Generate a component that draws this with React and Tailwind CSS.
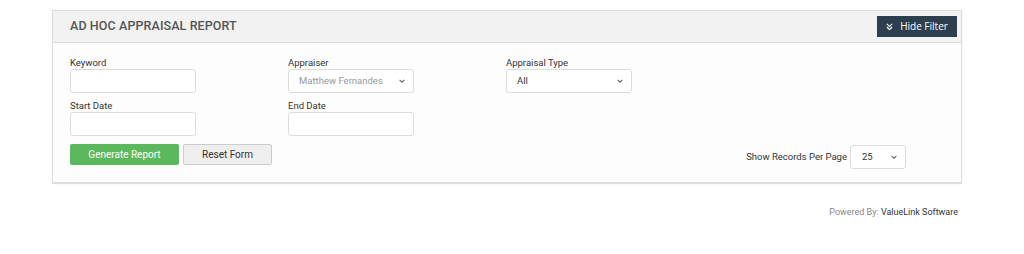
import React from 'react';

const Chevron = () => (
    <svg width="8" height="8" viewBox="0 0 10 10" className="text-[#666]">
        <path d="M2 3.5 L5 6.5 L8 3.5" fill="none" stroke="currentColor" strokeWidth="1.4" />
    </svg>
);

const DoubleChevron = () => (
    <svg width="7" height="8" viewBox="0 0 8 9" className="text-white">
        <path d="M1 1 L4 4 L7 1 M1 4.5 L4 7.5 L7 4.5" fill="none" stroke="currentColor" strokeWidth="1.3" />
    </svg>
);

const Field = ({ label, children }) => (
    <div className="w-[126px]">
        <label className="block text-[9.5px] text-[#333] leading-[11px] mb-[1px]">{label}</label>
        {children}
    </div>
);

const TextInput = () => (
    <input type="text" className="w-full h-[24px] bg-white border border-[#dcdcdc] rounded-[3px] outline-none" />
);

const Select = ({ value, muted, className = 'w-full pl-[10px]' }) => (
    <div className={`${className} h-[24px] bg-white border border-[#dcdcdc] rounded-[3px] flex items-center justify-between pr-[7px]`}>
        <span className={`text-[9.5px] ${muted ? 'text-[#999]' : 'text-[#333]'}`}>{value}</span>
        <Chevron />
    </div>
);

export default function App() {
    return (
        <div className="w-[1024px] h-[254px] bg-white pt-[10px] font-['Roboto',sans-serif]">
            <div className="ml-[52px] w-[910px] border border-[#dedede] shadow-[0_1px_1px_rgba(0,0,0,0.12)] bg-[#fdfdfd]">
                {/* Header */}
                <div className="h-[32px] bg-[#f2f2f2] border-b border-[#dedede] flex items-center justify-between pl-[17px] pr-[4px]">
                    <h2 className="text-[12.5px] font-medium text-[#555] tracking-[0.1px]">AD HOC APPRAISAL REPORT</h2>
                    <button className="h-[21px] w-[80px] bg-[#2d3e4f] text-white flex items-center justify-center gap-[7px]">
                        <DoubleChevron />
                        <span className="font-['Open_Sans',sans-serif] text-[10px] font-medium">Hide Filter</span>
                    </button>
                </div>

                {/* Body */}
                <div className="pl-[17px] pr-[55px] pt-[14px] pb-[17px]">
                    <div className="flex gap-[92px]">
                        <Field label="Keyword"><TextInput /></Field>
                        <Field label="Appraiser"><Select value="Matthew Fernandes" muted /></Field>
                        <Field label="Appraisal Type"><Select value="All" /></Field>
                    </div>
                    <div className="flex gap-[92px] mt-[7px]">
                        <Field label="Start Date"><TextInput /></Field>
                        <Field label="End Date"><TextInput /></Field>
                    </div>
                    <div className="flex items-end justify-between mt-[8px]">
                        <div className="flex gap-[4px]">
                            <button className="h-[21px] w-[109px] bg-[#5cb85c] text-white text-[10px] rounded-[2px]">Generate Report</button>
                            <button className="h-[21px] w-[89px] bg-[#efefef] border border-[#ccc] text-[#333] text-[10px] rounded-[2px]">Reset Form</button>
                        </div>
                        <div className="flex items-center gap-[3px] mb-[-4px]">
                            <span className="text-[9.5px] text-[#333]">Show Records Per Page</span>
                            <Select value="25" className="w-[56px] pl-[11px]" />
                        </div>
                    </div>
                </div>
            </div>
            <div className="w-[962px] text-right mt-[23px] pr-[4px] text-[9px]">
                <span className="text-[#888]">Powered By: </span>
                <span className="text-[#333]">ValueLink Software</span>
            </div>
        </div>
    );
}
